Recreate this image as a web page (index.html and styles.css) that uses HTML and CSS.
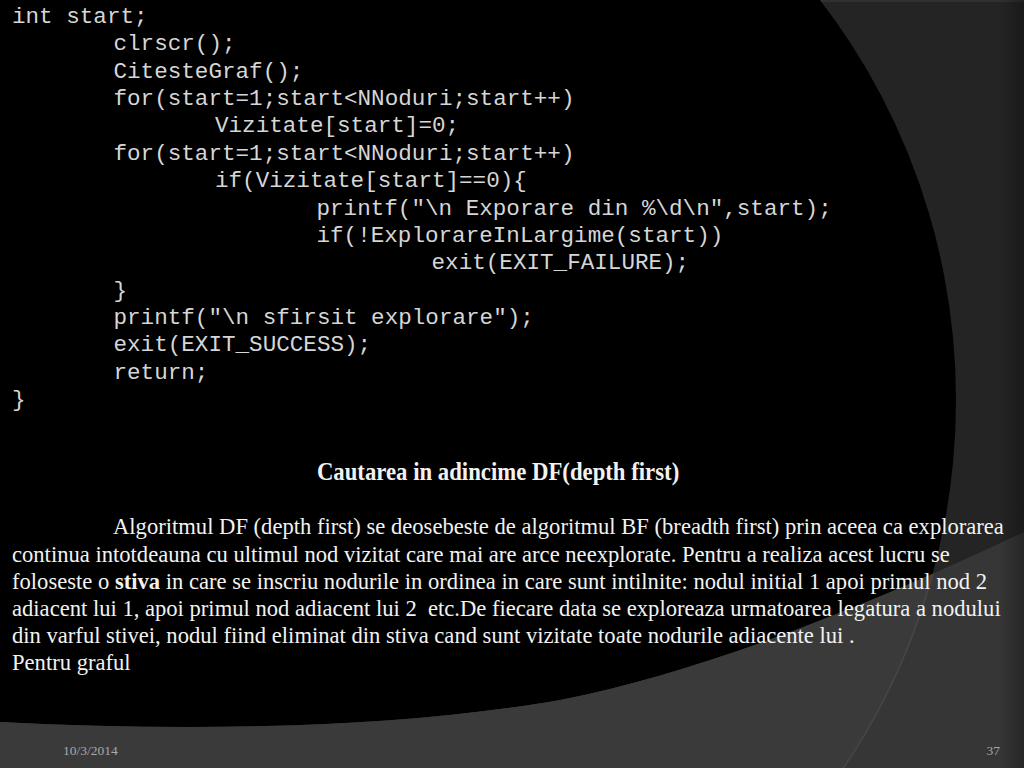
FILE: index.html
```html
<!DOCTYPE html>
<html lang="ro">

<head>
    <meta charset="UTF-8">
    <title>Cautarea in adincime DF</title>
    <link rel="stylesheet" href="styles.css">
</head>

<body>
    <div class="slide">
        <svg class="bg" viewBox="0 0 1024 768" width="1024" height="768" aria-hidden="true">
            <defs>
                <clipPath id="band">
                    <path d="M0 722 C200 732 400 728 560 700 C700 672 860 610 1024 532 L1024 768 L0 768 Z" />
                </clipPath>
                <linearGradient id="edge" x1="0" x2="1" y1="0" y2="0">
                    <stop offset="0" stop-color="#000" stop-opacity="0" />
                    <stop offset="1" stop-color="#000" stop-opacity="0.3" />
                </linearGradient>
            </defs>
            <rect width="1024" height="768" fill="#242424" />
            <rect width="1024" height="2" fill="#303030" />
            <ellipse cx="329" cy="400" rx="627" ry="643" fill="#000" />
            <g clip-path="url(#band)">
                <rect width="1024" height="768" fill="#363636" />
                <ellipse cx="329" cy="400" rx="627" ry="643" fill="#3a3a3a" stroke="#474747" stroke-width="1.5" />
            </g>
            <rect x="1000" width="24" height="768" fill="url(#edge)" />
        </svg>

        <div class="content">
<pre class="code">int start;
	clrscr();
	CitesteGraf();
	for(start=1;start&lt;NNoduri;start++)
		Vizitate[start]=0;
	for(start=1;start&lt;NNoduri;start++)
		if(Vizitate[start]==0){
			printf("\n Exporare din %\d\n",start);
			if(!ExplorareInLargime(start))
				 exit(EXIT_FAILURE);
	}
	printf("\n sfirsit explorare");
	exit(EXIT_SUCCESS);
	return;
}</pre>

            <h2 class="title"><span>Cautarea in adincime DF(depth first)</span></h2>

            <p class="text indent">Algoritmul DF (depth first) se deosebeste de algoritmul BF (breadth first) prin aceea ca explorarea<br>continua intotdeauna cu ultimul nod vizitat care mai are arce neexplorate. Pentru a realiza acest lucru se<br>foloseste o <b>stiva</b> in care se inscriu nodurile in ordinea in care sunt intilnite: nodul initial 1 apoi primul nod 2<br>adiacent lui 1, apoi primul nod adiacent lui 2 &nbsp;etc.De fiecare data se exploreaza urmatoarea legatura a nodului<br>din varful stivei, nodul fiind eliminat din stiva cand sunt vizitate toate nodurile adiacente lui .</p>
            <p class="text">Pentru graful</p>
        </div>

        <div class="footer">
            <span>10/3/2014</span>
            <span>37</span>
        </div>
    </div>
</body>

</html>
```
FILE: styles.css
```css
* {
    margin: 0;
    padding: 0;
}

body {
    background-color: #000;
}

.slide {
    position: relative;
    width: 1024px;
    height: 768px;
    overflow: hidden;
    display: flex;
    flex-direction: column;
    color: #f2f2f2;
}

.bg {
    position: absolute;
    left: 0;
    top: 0;
    z-index: 0;
}

.content {
    position: relative;
    z-index: 1;
    padding: 4px 0 0 12px;
}

.code {
    font-family: "Liberation Mono", "Courier New", monospace;
    font-size: 22.6px;
    line-height: 27.36px;
    tab-size: 101.5px;
    color: #d6d6d6;
}

.title {
    margin-top: 44px;
    text-align: center;
    padding-right: 39px;
    font-family: "Liberation Serif", "Times New Roman", serif;
    font-size: 25px;
    line-height: 27.4px;
    font-weight: bold;
}

.title span {
    display: inline-block;
    transform: scaleX(0.91);
}

.text {
    font-family: "Liberation Serif", "Times New Roman", serif;
    font-size: 22.6px;
    line-height: 27.2px;
    white-space: nowrap;
}

.text.indent {
    margin-top: 27.6px;
    text-indent: 101px;
}

.footer {
    position: relative;
    z-index: 1;
    margin-top: auto;
    display: flex;
    justify-content: space-between;
    padding: 0 24px 10px 63px;
    font-family: "Liberation Serif", "Times New Roman", serif;
    font-size: 13.5px;
    line-height: 14px;
    color: #a8a8a8;
}
```
